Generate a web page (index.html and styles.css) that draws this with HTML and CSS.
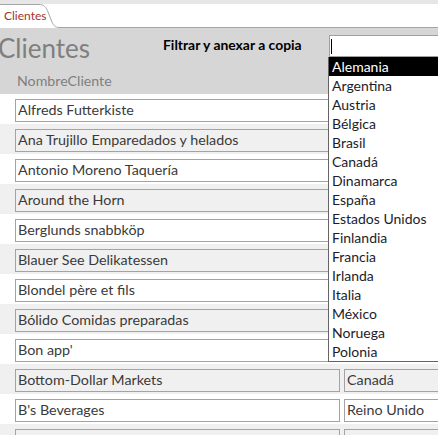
FILE: index.html
```html
<!DOCTYPE html>
<html lang="es">
<head>
<meta charset="utf-8">
<title>Clientes</title>
<link rel="stylesheet" href="styles.css">
</head>
<body>
<div class="tabstrip">
  <div class="tab">
    <svg class="tab-outline" width="60" height="24" viewBox="0 0 60 24"><path d="M0 0.5 H39 C44 0.5 46 3 48 8 L52 18 C54 22.5 56 23.5 60 23.5" fill="none" stroke="#a6a6a6" stroke-width="1"/></svg>
    <span class="tab-label">Clientes</span>
  </div>
  <div class="tab-fill"></div>
</div>
<div class="form">
  <div class="header">
    <div class="header-top">
      <h1 class="title">Clientes</h1>
      <div class="filter-label">Filtrar y anexar a copia</div>
      <div class="search"><span class="caret"></span></div>
    </div>
    <div class="col-label">NombreCliente</div>
    <ul class="dropdown">
      <li class="selected">Alemania</li>
      <li>Argentina</li>
      <li>Austria</li>
      <li>Bélgica</li>
      <li>Brasil</li>
      <li>Canadá</li>
      <li>Dinamarca</li>
      <li>España</li>
      <li>Estados Unidos</li>
      <li>Finlandia</li>
      <li>Francia</li>
      <li>Irlanda</li>
      <li>Italia</li>
      <li>México</li>
      <li>Noruega</li>
      <li>Polonia</li>
    </ul>
  </div>
  <div class="rows">
    <div class="row"><div class="field name">Alfreds Futterkiste</div><div class="field country"></div></div>
    <div class="row alt"><div class="field name">Ana Trujillo Emparedados y helados</div><div class="field country"></div></div>
    <div class="row"><div class="field name">Antonio Moreno Taquería</div><div class="field country"></div></div>
    <div class="row alt"><div class="field name">Around the Horn</div><div class="field country"></div></div>
    <div class="row"><div class="field name">Berglunds snabbköp</div><div class="field country"></div></div>
    <div class="row alt"><div class="field name">Blauer See Delikatessen</div><div class="field country"></div></div>
    <div class="row"><div class="field name">Blondel père et fils</div><div class="field country"></div></div>
    <div class="row alt"><div class="field name">Bólido Comidas preparadas</div><div class="field country"></div></div>
    <div class="row"><div class="field name">Bon app'</div><div class="field country"></div></div>
    <div class="row alt"><div class="field name">Bottom-Dollar Markets</div><div class="field country">Canadá</div></div>
    <div class="row"><div class="field name">B's Beverages</div><div class="field country">Reino Unido</div></div>
    <div class="row alt"><div class="field name">Cactus Comidas para llevar</div><div class="field country">Argentina</div></div>
  </div>
</div>
</body>
</html>
```
FILE: styles.css
```css
html, body {
  margin: 0;
  padding: 0;
}
body {
  width: 438px;
  height: 435px;
  overflow: hidden;
  background: #ffffff;
  font-family: Lato, "Open Sans", sans-serif;
}
.tabstrip {
  display: flex;
  align-items: flex-end;
  height: 28px;
  background: linear-gradient(#e6e6e6 0 4px, #ffffff 4px);
}
.tab {
  position: relative;
  width: 58px;
  height: 24px;
  background: #ffffff;
  flex: none;
}
.tab-outline {
  position: absolute;
  left: 0;
  top: 0;
}
.tab-label {
  display: block;
  padding: 5px 0 0 4px;
  font-size: 12px;
  color: #a8312c;
  line-height: 14px;
}
.tab-fill {
  flex: 1;
  height: 24px;
  border-bottom: 1px solid #a6a6a6;
  box-sizing: border-box;
}
.form {
  background: #ffffff;
}
.header {
  position: relative;
  height: 66px;
  background: #d6d6d6;
}
.header-top {
  display: flex;
  align-items: flex-start;
  height: 43px;
}
.title {
  margin: 5px 0 0 -2px;
  font-size: 26px;
  font-weight: 400;
  color: #7f7f7f;
  line-height: 30px;
  width: 165px;
  flex: none;
}
.filter-label {
  margin-top: 8px;
  font-size: 13.9px;
  font-weight: 700;
  color: #000000;
  line-height: 17px;
  width: 166px;
  flex: none;
}
.search {
  margin-top: 7px;
  flex: 1;
  height: 22px;
  background: #ffffff;
  border: 1px solid #a0a0a0;
  border-right: none;
  box-sizing: border-box;
  position: relative;
}
.caret {
  position: absolute;
  left: 1px;
  top: 3px;
  width: 1px;
  height: 15px;
  background: #000000;
}
.col-label {
  padding-left: 17px;
  font-size: 14.2px;
  color: #808080;
  line-height: 19px;
}
.dropdown {
  position: absolute;
  left: 328px;
  top: 29px;
  width: 120px;
  margin: 0;
  padding: 0;
  list-style: none;
  background: #ffffff;
  border-left: 1px solid #646464;
  border-bottom: 1px solid #646464;
  z-index: 2;
}
.dropdown li {
  height: 19px;
  line-height: 19px;
  padding-left: 3px;
  font-size: 14px;
  color: #1c1c2a;
}
.dropdown li.selected {
  background: #000000;
  color: #ffffff;
}
.rows {
  display: flex;
  flex-direction: column;
}
.row {
  display: flex;
  gap: 4px;
  height: 30px;
  padding: 5px 0 0 15px;
  box-sizing: border-box;
  background: #ffffff;
}
.row.alt {
  background: #f0f0f0;
}
.field {
  height: 23px;
  border: 1px solid #a3a3a3;
  box-sizing: border-box;
  padding-left: 2px;
  font-size: 14.3px;
  line-height: 20px;
  color: #3a3a3a;
  white-space: nowrap;
  overflow: hidden;
  flex: none;
}
.name {
  width: 325px;
}
.country {
  width: 120px;
}
```
